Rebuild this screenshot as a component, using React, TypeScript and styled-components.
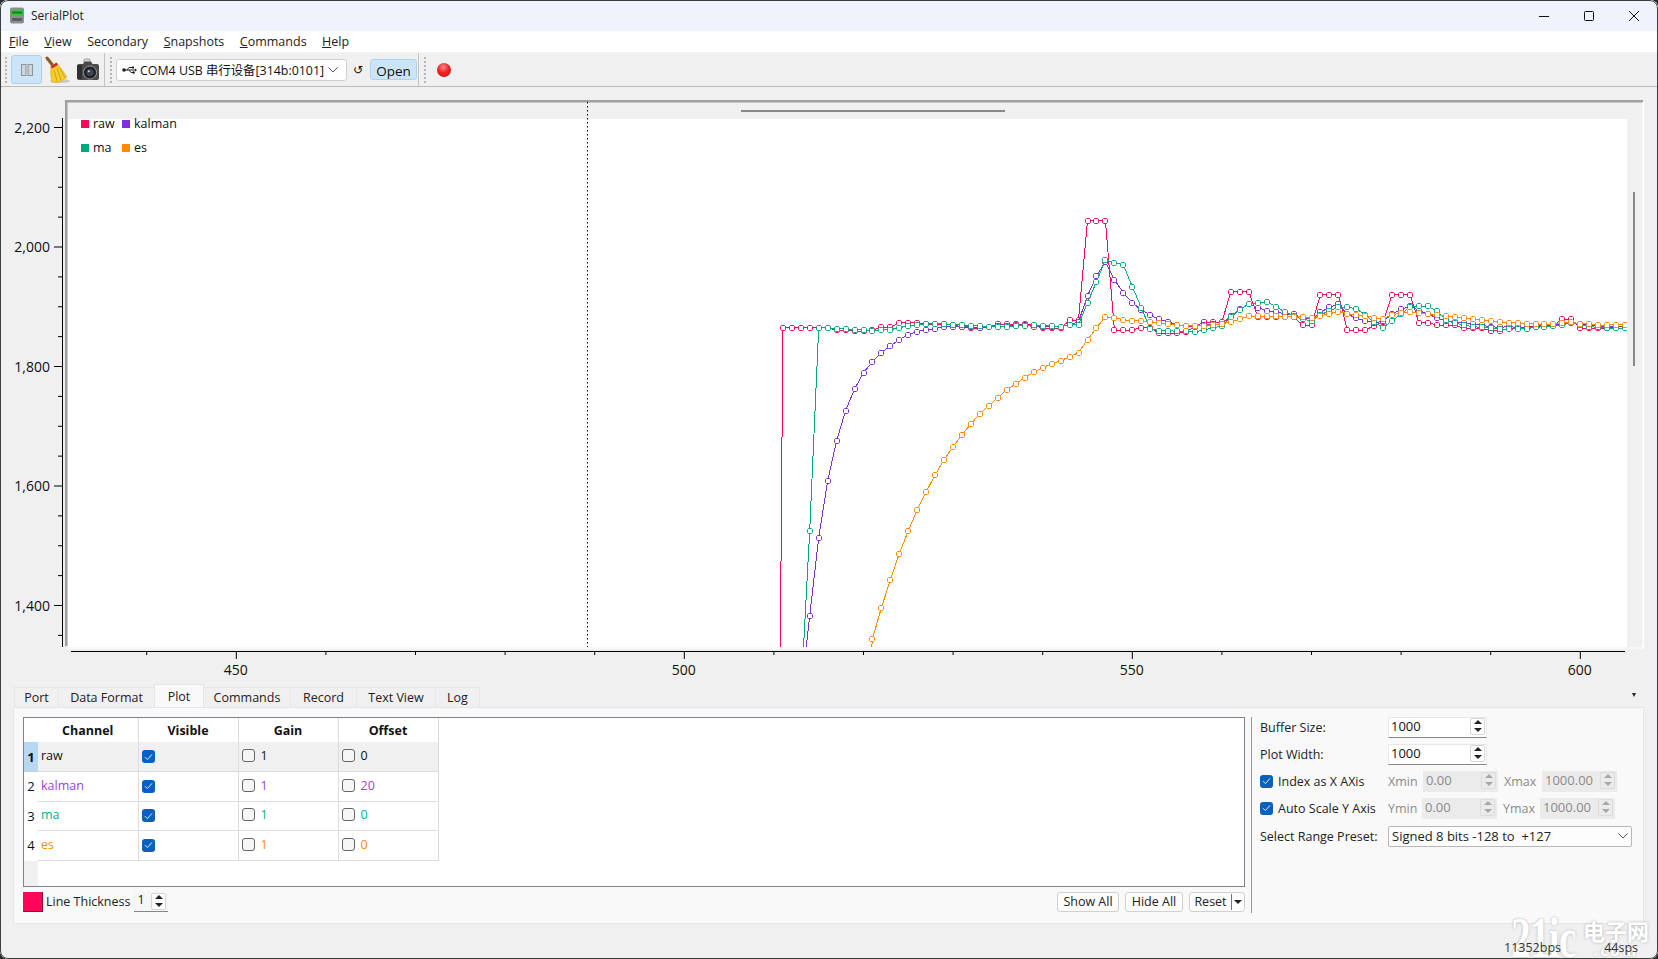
import React from "react";
import styled, { createGlobalStyle } from "styled-components";

const uiFont = `"Open Sans", "Noto Sans CJK SC", sans-serif`;

const GlobalStyle = createGlobalStyle`
  html, body {
    margin: 0;
    padding: 0;
    background: #2a2a2e;
    overflow: hidden;
  }
  body {
    font-family: ${uiFont};
    font-size: 13.5px;
    color: #111;
  }
`;

// chart data, read as y in "z" units: y = 190 + z / 3
type Series = { name: string; color: string; start: number; z: number[] };

const series: Series[] = [
  {
    name: "raw",
    color: "#ff0759",
    start: 510,
    z: [
      3756, 413, 413, 413, 413, 413, 413, 421, 421, 424, 424, 421, 412, 412, 398, 398, 398, 403, 403, 403, 406, 410, 415, 415, 410,
      403, 403, 403, 403, 406, 415, 415, 415, 390, 390, 92, 92, 92, 420, 420, 420, 413, 413, 430, 430, 430, 425, 410, 396, 396,
      396, 305, 305, 305, 380, 380, 380, 380, 380, 405, 405, 314, 314, 314, 420, 420, 420, 407, 395, 314, 314, 314, 398, 398, 405,
      405, 405, 415, 415, 415, 422, 422, 415, 413, 413, 406, 406, 406, 388, 388, 415, 415, 415, 415, 410, 410,
    ],
  },
  {
    name: "kalman",
    color: "#7f2fd6",
    start: 513,
    z: [
      1515, 1277, 1043, 872, 752, 662, 597, 548, 515, 488, 467, 449, 434, 425, 419, 416, 410, 410, 410, 410, 413, 410, 408, 408, 405,
      405, 410, 410, 410, 410, 404, 395, 317, 258, 215, 269, 308, 338, 360, 375, 388, 396, 404, 408, 410, 404, 403, 402, 378, 358,
      342, 353, 362, 365, 372, 372, 385, 388, 367, 352, 343, 372, 385, 392, 398, 394, 372, 358, 348, 362, 372, 384, 392, 396, 400,
      403, 406, 410, 412, 410, 412, 412, 410, 408, 406, 402, 398, 402, 405, 408, 410, 410, 408,
    ],
  },
  {
    name: "ma",
    color: "#00a97f",
    start: 513,
    z: [
      1524, 1022, 413, 413, 416, 416, 419, 419, 422, 419, 419, 413, 407, 404, 401, 401, 401, 404, 404, 407, 407, 410, 410, 410, 407,
      407, 404, 407, 407, 410, 404, 404, 338, 275, 210, 218, 224, 290, 353, 416, 422, 422, 424, 424, 425, 420, 414, 408, 380, 360,
      342, 338, 335, 350, 365, 378, 388, 392, 375, 362, 352, 352, 356, 375, 397, 413, 392, 372, 350, 348, 348, 364, 390, 400, 405,
      410, 412, 414, 418, 418, 416, 416, 412, 410, 408, 405, 398, 404, 410, 412, 414, 415, 415,
    ],
  },
  {
    name: "es",
    color: "#ff8a00",
    start: 520,
    z: [
      1665, 1346, 1253, 1169, 1091, 1022, 959, 905, 854, 809, 770, 734, 701, 671, 647, 623, 599, 581, 563, 547, 533, 521, 512, 500, 488,
      449, 413, 380, 383, 389, 392, 392, 395, 398, 401, 404, 407, 407, 407, 405, 403, 395, 388, 378, 378, 378, 378, 380, 380, 380,
      384, 378, 371, 365, 371, 374, 378, 383, 386, 375, 368, 365, 368, 371, 374, 378, 382, 385, 387, 389, 392, 395, 398, 398, 401,
      402, 402, 402, 398, 397, 401, 402, 405, 405, 404, 404,
    ],
  },
];

const xOf = (i: number) => 236.3 + (i - 450) * 8.96;
const yOf = (v: number) => 247 - (v - 2000) * 0.5975;

// little octagon snapped to the pixel grid, looks like the plot's aliased circles
const marker = (x: number, y: number) => {
  const cx = Math.round(x);
  const cy = Math.round(y);
  const a = 1.5;
  const b = 2.5;
  return [
    [cx - a, cy - b], [cx + a, cy - b], [cx + b, cy - a], [cx + b, cy + a],
    [cx + a, cy + b], [cx - a, cy + b], [cx - b, cy + a], [cx - b, cy - a],
  ].map((p) => p.join(",")).join(" ");
};

const Chart = () => {
  const xTicks: number[] = [];
  for (let i = 440; i <= 600; i += 10) xTicks.push(i);
  const yTicks: number[] = [];
  for (let v = 1350; v <= 2200; v += 50) yTicks.push(v);

  return (
    <ChartSvg viewBox="0 87 1657 597" width={1657} height={597}>
      <defs>
        <clipPath id="canvas">
          <rect x={68} y={103} width={1559} height={544} />
        </clipPath>
      </defs>
      <rect x={66} y={101} width={1577} height={547} fill="#f0f0f0" />
      <rect x={65} y={100} width={1578} height={2.5} fill="#a0a0a0" />
      <rect x={65} y={100} width={2.5} height={546} fill="#a0a0a0" />
      <rect x={1642.5} y={102} width={1.5} height={546} fill="#fff" />
      <rect x={68} y={647.5} width={1576} height={1} fill="#fff" />
      <rect x={68} y={119} width={1559} height={528} fill="#fff" />
      <rect x={741} y={110} width={264} height={2} fill="#888" />
      <rect x={1633} y={192} width={2} height={174} fill="#888" />
      <line x1={587.5} y1={102} x2={587.5} y2={647} stroke="#000" strokeDasharray="1.5 2.5" />

      <g clipPath="url(#canvas)">
        {series.map((s) => {
          const pts = s.z.map((z, k) => ({ x: xOf(s.start + k), y: 190 + z / 3 }));
          return (
            <g key={s.name} stroke={s.color} fill="none" strokeWidth={1}>
              <polyline shapeRendering="crispEdges" points={pts.map((p) => `${p.x.toFixed(1)},${p.y.toFixed(1)}`).join(" ")} />
              {pts.map((p, k) => (
                <polygon key={k} points={marker(p.x, p.y)} fill="#fff" />
              ))}
            </g>
          );
        })}
      </g>

      <rect x={81} y={120} width={8} height={8} fill="#ff0759" />
      <AxisText x={93} y={128} $size={12.5}>raw</AxisText>
      <rect x={122} y={120} width={8} height={8} fill="#7f2fd6" />
      <AxisText x={134} y={128} $size={12.5}>kalman</AxisText>
      <rect x={81} y={144} width={8} height={8} fill="#00a97f" />
      <AxisText x={93} y={152} $size={12.5}>ma</AxisText>
      <rect x={122} y={144} width={8} height={8} fill="#ff8a00" />
      <AxisText x={134} y={152} $size={12.5}>es</AxisText>

      <line x1={62.5} y1={118} x2={62.5} y2={647} stroke="#000" strokeWidth={1} />
      {yTicks.map((v) => (
        <line key={v} x1={v % 200 === 0 ? 54 : 58} y1={yOf(v)} x2={62} y2={yOf(v)} stroke="#000" />
      ))}
      {[2200, 2000, 1800, 1600, 1400].map((v) => (
        <AxisText key={v} x={50} y={yOf(v) + 5} textAnchor="end">
          {v.toLocaleString("en-US")}
        </AxisText>
      ))}

      <line x1={71} y1={651.5} x2={1625} y2={651.5} stroke="#000" />
      {xTicks.map((i) => (
        <line key={i} x1={xOf(i)} y1={651} x2={xOf(i)} y2={i % 50 === 0 ? 659 : 655} stroke="#000" />
      ))}
      {[450, 500, 550, 600].map((i) => (
        <AxisText key={i} x={xOf(i) - 0.5} y={675} textAnchor="middle">
          {i}
        </AxisText>
      ))}
    </ChartSvg>
  );
};

const AppIcon = () => (
  <svg width="16" height="17" viewBox="0 0 16 17">
    <rect x="1" y="0.5" width="14" height="16" rx="2" fill="#8b8f8b" />
    <rect x="2" y="3" width="12" height="5" fill="#38c13c" />
    <rect x="3" y="4.5" width="10" height="2" fill="#1d7a20" />
    <rect x="3" y="11" width="10" height="3" fill="#5b5f5c" />
  </svg>
);

const PauseIcon = () => (
  <svg width="12" height="12" viewBox="0 0 12 12">
    <rect x="0.5" y="0.5" width="4.5" height="11" fill="#d0d4d6" stroke="#8f9597" />
    <rect x="7" y="0.5" width="4.5" height="11" fill="#d0d4d6" stroke="#8f9597" />
  </svg>
);

const BroomIcon = () => (
  <svg width="26" height="28" viewBox="0 0 26 28">
    <ellipse cx="15" cy="25" rx="10" ry="2" fill="#c9c9c9" />
    <path d="M2 2 L9 11" stroke="#8c5a22" strokeWidth="3" strokeLinecap="round" />
    <path d="M6 10 L12 7 L22 21 Q14 28 7 26 Q5 18 6 10 Z" fill="#f6cf2c" stroke="#d9a514" strokeWidth="0.6" />
    <path d="M9 14 L12 25 M12 12 L16 24 M15 12 L20 22" stroke="#c9930f" strokeWidth="0.8" fill="none" />
    <path d="M5.5 10.5 L11.5 6.5 L13 9 L7 12.5 Z" fill="#c8322a" />
  </svg>
);

const CameraIcon = () => (
  <svg width="24" height="24" viewBox="0 0 24 24">
    <rect x="8" y="1" width="6" height="4" rx="1" fill="#d8d8d8" stroke="#777" strokeWidth="0.6" />
    <path d="M1 8 Q1 6 3 6 L7 6 L8.5 3.5 L15 3.5 L16.5 6 L21 6 Q23 6 23 8 L23 20 Q23 22 21 22 L3 22 Q1 22 1 20 Z" fill="#4a4a4a" />
    <rect x="1" y="7" width="5" height="14" rx="1" fill="#2f2f2f" />
    <circle cx="14" cy="14.5" r="6.6" fill="#222" stroke="#9a9a9a" strokeWidth="1" />
    <circle cx="14" cy="14.5" r="3.6" fill="#3c4658" />
    <circle cx="12.8" cy="13.2" r="1" fill="#cfd6e0" />
  </svg>
);

const UsbIcon = () => (
  <PortIcon width="15" height="8" viewBox="0 0 15 8">
    <path d="M2 4 H14 M5 4 L7 1.5 H10 M7 4 L9 6.5 H11" stroke="#222" strokeWidth="1" fill="none" />
    <circle cx="2" cy="4" r="1.8" fill="#222" />
    <rect x="10" y="0.5" width="2" height="2" fill="#222" />
    <circle cx="11.6" cy="6.5" r="1.2" fill="#222" />
    <path d="M13 2.5 L15 4 L13 5.5 Z" fill="#222" />
  </PortIcon>
);

const Chevron = () => (
  <PortIcon width="10" height="6" viewBox="0 0 10 6">
    <path d="M0.5 0.5 L5 5 L9.5 0.5" stroke="#555" strokeWidth="1" fill="none" />
  </PortIcon>
);

const SmallCheck = () => (
  <svg width="9" height="8" viewBox="0 0 9 8">
    <path d="M1 4.2 L3.4 6.6 L8 1.4" stroke="#dfeaf8" strokeWidth="1" fill="none" />
  </svg>
);

const Spin = ({ disabled }: { disabled?: boolean }) => (
  <SpinArrows $disabled={disabled}>
    <ArrowBox><ArrowUp $disabled={disabled} /></ArrowBox>
    <ArrowBox><ArrowDown $disabled={disabled} /></ArrowBox>
  </SpinArrows>
);

const rows = [
  { id: 1, name: "raw", gain: "1", offset: "0", color: "#111", active: true },
  { id: 2, name: "kalman", gain: "1", offset: "20", color: "#9b3fe0", active: false },
  { id: 3, name: "ma", gain: "1", offset: "0", color: "#00b38c", active: false },
  { id: 4, name: "es", gain: "1", offset: "0", color: "#ff8c00", active: false },
];

const tabs = [
  { label: "Port", width: 45 },
  { label: "Data Format", width: 97 },
  { label: "Plot", width: 50, active: true },
  { label: "Commands", width: 88 },
  { label: "Record", width: 67 },
  { label: "Text View", width: 80 },
  { label: "Log", width: 45 },
];

export default function App() {
  return (
    <>
      <GlobalStyle />
      <Win>
        <TitleBar>
          <AppIcon />
          <TitleText>SerialPlot</TitleText>
          <WinControls>
            <svg width="12" height="12" viewBox="0 0 12 12">
              <path d="M1 6.5 H11" stroke="#111" strokeWidth="1" />
            </svg>
            <svg width="12" height="12" viewBox="0 0 12 12">
              <rect x="1.5" y="1.5" width="9" height="9" rx="1" stroke="#111" fill="none" />
            </svg>
            <svg width="12" height="12" viewBox="0 0 12 12">
              <path d="M1 1 L11 11 M11 1 L1 11" stroke="#111" strokeWidth="1" />
            </svg>
          </WinControls>
        </TitleBar>

        <MenuBar>
          <MenuItem><u>F</u>ile</MenuItem>
          <MenuItem><u>V</u>iew</MenuItem>
          <MenuItem>Secondary</MenuItem>
          <MenuItem><u>S</u>napshots</MenuItem>
          <MenuItem><u>C</u>ommands</MenuItem>
          <MenuItem><u>H</u>elp</MenuItem>
        </MenuBar>

        <ToolBar>
          <Grip />
          <PauseButton><PauseIcon /></PauseButton>
          <ToolIcon $width={31}><BroomIcon /></ToolIcon>
          <ToolIcon $width={30}><CameraIcon /></ToolIcon>
          <ToolSep />
          <Grip />
          <PortCombo>
            <UsbIcon />
            <PortText>COM4 USB 串行设备[314b:0101]</PortText>
            <Chevron />
          </PortCombo>
          <Refresh>↺</Refresh>
          <OpenButton>Open</OpenButton>
          <ToolSep />
          <Grip />
          <RecordDot />
        </ToolBar>

        <Chart />

        <BottomArea>
          <TabBar>
            {tabs.map((t) => (
              <Tab key={t.label} $width={t.width} $active={t.active}>{t.label}</Tab>
            ))}
            <TabMenu />
          </TabBar>

          <Pane>
            <LeftColumn>
              <TableFrame>
                <ChannelTable>
                  <thead>
                    <tr>
                      <CornerCell />
                      <HeadCell>Channel</HeadCell>
                      <HeadCell>Visible</HeadCell>
                      <HeadCell>Gain</HeadCell>
                      <HeadCell>Offset</HeadCell>
                    </tr>
                  </thead>
                  <tbody>
                    {rows.map((r) => (
                      <tr key={r.id}>
                        <RowHead $active={r.active}>{r.id}</RowHead>
                        <Cell $active={r.active} $color={r.color}>{r.name}</Cell>
                        <Cell $active={r.active}>
                          <CheckBox $checked><SmallCheck /></CheckBox>
                        </Cell>
                        <Cell $active={r.active} $color={r.color}>
                          <CellInner><CheckBox />{r.gain}</CellInner>
                        </Cell>
                        <Cell $active={r.active} $color={r.color}>
                          <CellInner><CheckBox />{r.offset}</CellInner>
                        </Cell>
                      </tr>
                    ))}
                  </tbody>
                </ChannelTable>
                <TableFill><FillHead /></TableFill>
              </TableFrame>

              <TableFooter>
                <Swatch />
                <span>Line Thickness</span>
                <ThicknessBox>
                  <ThicknessValue>1</ThicknessValue>
                  <Spin />
                </ThicknessBox>
                <FooterRight>
                  <PushButton $width={62}>Show All</PushButton>
                  <PushButton $width={58}>Hide All</PushButton>
                  <ResetButton>
                    <ResetLabel>Reset</ResetLabel>
                    <ResetCaret><ArrowDown /></ResetCaret>
                  </ResetButton>
                </FooterRight>
              </TableFooter>
            </LeftColumn>

            <VSep />

            <Settings>
              <SettingRow>
                <FieldLabel>Buffer Size:</FieldLabel>
                <SpinBox $width={99}>1000<Spin /></SpinBox>
              </SettingRow>
              <SettingRow>
                <FieldLabel>Plot Width:</FieldLabel>
                <SpinBox $width={99}>1000<Spin /></SpinBox>
              </SettingRow>
              <SettingRow>
                <FieldLabel>
                  <CheckBox $checked><SmallCheck /></CheckBox>
                  Index as X AXis
                </FieldLabel>
                <RangeLabel $width={35}>Xmin</RangeLabel>
                <SpinBox $width={75} $disabled>0.00<Spin disabled /></SpinBox>
                <RangeLabel $width={38} $left={6}>Xmax</RangeLabel>
                <SpinBox $width={75} $disabled>1000.00<Spin disabled /></SpinBox>
              </SettingRow>
              <SettingRow>
                <FieldLabel>
                  <CheckBox $checked><SmallCheck /></CheckBox>
                  Auto Scale Y Axis
                </FieldLabel>
                <RangeLabel $width={34}>Ymin</RangeLabel>
                <SpinBox $width={75} $disabled>0.00<Spin disabled /></SpinBox>
                <RangeLabel $width={37} $left={6}>Ymax</RangeLabel>
                <SpinBox $width={75} $disabled>1000.00<Spin disabled /></SpinBox>
              </SettingRow>
              <PresetRow>
                <FieldLabel>Select Range Preset:</FieldLabel>
                <PresetCombo>
                  <span>Signed 8 bits -128 to  +127</span>
                  <Chevron />
                </PresetCombo>
              </PresetRow>
            </Settings>
          </Pane>

          <StatusBar>
            <Watermark>
              <Mark21>21ic</Mark21>
              <MarkCn>
                电子网
                <MarkCom>.com</MarkCom>
              </MarkCn>
            </Watermark>
            <StatusText $right={97}>11352bps</StatusText>
            <StatusText $right={20}>44sps</StatusText>
          </StatusBar>
        </BottomArea>
      </Win>
    </>
  );
}

const Win = styled.div`
  position: relative;
  width: 1658px;
  height: 959px;
  display: flex;
  flex-direction: column;
  background: #f0f0f0;
  border-radius: 8px;
  overflow: hidden;

  &::after {
    content: "";
    position: absolute;
    inset: 0;
    border: 1px solid #3d3d40;
    border-radius: 8px;
    pointer-events: none;
  }
`;

const TitleBar = styled.div`
  height: 31px;
  flex: none;
  display: flex;
  align-items: center;
  padding-left: 9px;
  background: #eff3fb;
`;

const TitleText = styled.span`
  margin-left: 6px;
  font-size: 12px;
  color: #222;
`;

const WinControls = styled.div`
  margin-left: auto;
  margin-right: 18px;
  display: flex;
  gap: 33px;
`;

const MenuBar = styled.div`
  height: 21px;
  flex: none;
  display: flex;
  align-items: center;
  padding-left: 9px;
  gap: 15.5px;
  background: #fff;
  border-bottom: 1px solid #f4f4f4;
`;

const MenuItem = styled.span`
  font-size: 12.5px;
  color: #222;
`;

const ToolBar = styled.div`
  height: 33px;
  flex: none;
  display: flex;
  align-items: center;
  background: #f0f0f0;
  border-bottom: 1px solid #bcbcbc;
`;

const Grip = styled.div`
  width: 2px;
  height: 26px;
  margin: 0 4px 0 5px;
  background: repeating-linear-gradient(to bottom, #b5b5b5 0 2px, transparent 2px 4px);
`;

const PauseButton = styled.div`
  width: 31px;
  height: 29px;
  display: flex;
  align-items: center;
  justify-content: center;
  box-sizing: border-box;
  background: #cce4f7;
  border: 1px solid #aed2ec;
  border-radius: 3px;
`;

const ToolIcon = styled.div<{ $width: number }>`
  width: ${(p) => p.$width}px;
  display: flex;
  align-items: center;
  justify-content: center;
`;

const ToolSep = styled.div`
  width: 1px;
  height: 33px;
  margin-left: 1px;
  background: #c4c4c4;
`;

const PortIcon = styled.svg`
  flex: none;
`;

const PortCombo = styled.div`
  width: 231px;
  height: 22px;
  box-sizing: border-box;
  display: flex;
  align-items: center;
  padding: 0 8px 0 5px;
  background: #fff;
  border: 1px solid #d0d0d0;
  border-radius: 3px;
`;

const PortText = styled.span`
  flex: 1;
  margin-left: 3px;
  font-size: 12.4px;
  white-space: nowrap;
`;

const Refresh = styled.span`
  width: 22px;
  margin-right: 1px;
  text-align: center;
  font-family: "DejaVu Sans", sans-serif;
  font-size: 12px;
`;

const OpenButton = styled.div`
  width: 47px;
  height: 21px;
  box-sizing: border-box;
  display: flex;
  align-items: center;
  justify-content: center;
  padding-top: 2px;
  font-size: 13.5px;
  background: #cce4f7;
  border: 1px solid #aed2ec;
  border-radius: 3px;
`;

const RecordDot = styled.div`
  width: 14px;
  height: 14px;
  margin-left: 7px;
  border-radius: 50%;
  background: radial-gradient(circle at 45% 30%, #ff8a8a 0%, #ee2222 45%, #c01414 100%);
`;

const ChartSvg = styled.svg`
  flex: none;
  display: block;
`;

const AxisText = styled.text<{ $size?: number }>`
  font-family: ${uiFont};
  font-size: ${(p) => p.$size ?? 14}px;
  fill: #111;
`;

const BottomArea = styled.div`
  flex: 1;
  display: flex;
  flex-direction: column;
  min-height: 0;
`;

const TabBar = styled.div`
  height: 23px;
  flex: none;
  display: flex;
  align-items: flex-end;
  padding-left: 14px;
`;

const Tab = styled.div<{ $width: number; $active?: boolean }>`
  width: ${(p) => p.$width}px;
  height: ${(p) => (p.$active ? 23 : 20)}px;
  box-sizing: border-box;
  display: flex;
  align-items: center;
  justify-content: center;
  font-size: 12.5px;
  color: #222;
  background: ${(p) => (p.$active ? "#f9f9f9" : "#f0f0f0")};
  border: 1px solid #e6e6e6;
  border-bottom: none;
  margin-right: -1px;
`;

const TabMenu = styled.div`
  margin: 0 22px 10px auto;
  width: 0;
  height: 0;
  border-left: 2.5px solid transparent;
  border-right: 2.5px solid transparent;
  border-top: 4px solid #222;
`;

const Pane = styled.div`
  height: 217px;
  flex: none;
  box-sizing: border-box;
  display: flex;
  margin: 0 14px 0 13px;
  padding: 9px 10px 0 9px;
  background: #f9f9f9;
  border: 1px solid #e6e6e6;
`;

const LeftColumn = styled.div`
  width: 1222px;
  flex: none;
`;

const TableFrame = styled.div`
  height: 170px;
  box-sizing: border-box;
  display: flex;
  flex-direction: column;
  background: #fff;
  border: 1px solid #82828e;
`;

const ChannelTable = styled.table`
  border-collapse: collapse;
  table-layout: fixed;
  width: 414px;
  flex: none;
  font-size: 12.5px;
`;

const CornerCell = styled.th`
  box-sizing: border-box;
  width: 14px;
  height: 24px;
  padding: 0;
`;

const HeadCell = styled.th`
  box-sizing: border-box;
  width: 100px;
  height: 24px;
  padding: 0;
  font-weight: 700;
  font-size: 12.5px;
  border-right: 1px solid #dcdcdc;
`;

const RowHead = styled.td<{ $active: boolean }>`
  box-sizing: border-box;
  height: 29.5px;
  padding: 0;
  text-align: center;
  font-size: 13px;
  font-weight: ${(p) => (p.$active ? 700 : 400)};
  background: ${(p) => (p.$active ? "#b8d8f2" : "#fff")};
`;

const Cell = styled.td<{ $active: boolean; $color?: string }>`
  box-sizing: border-box;
  height: 29.5px;
  padding: 0 3px 2px;
  color: ${(p) => p.$color ?? "#111"};
  background: ${(p) => (p.$active ? "#f0f0f0" : "#fff")};
  border-right: 1px solid #dcdcdc;
  border-bottom: 1px solid #dcdcdc;
  font-size: 12.5px;
`;

const CellInner = styled.div`
  display: flex;
  align-items: center;
  gap: 6px;
`;

const CheckBox = styled.span<{ $checked?: boolean }>`
  flex: none;
  width: 13px;
  height: 13px;
  box-sizing: border-box;
  display: inline-flex;
  align-items: center;
  justify-content: center;
  vertical-align: middle;
  border-radius: 3px;
  background: ${(p) => (p.$checked ? "#0a60bf" : "#f6f6f6")};
  border: ${(p) => (p.$checked ? "none" : "1px solid #666")};
`;

const TableFill = styled.div`
  flex: 1;
  display: flex;
`;

const FillHead = styled.div`
  width: 14px;
  background: #f0f0f0;
`;

const TableFooter = styled.div`
  height: 21px;
  margin-top: 4px;
  display: flex;
  align-items: center;
  font-size: 12.5px;
  color: #222;
`;

const Swatch = styled.div`
  width: 20px;
  height: 20px;
  margin-right: 3px;
  box-sizing: border-box;
  background: #ff0759;
  border-right: 1px solid #8f0a38;
  border-bottom: 1px solid #8f0a38;
`;

const ThicknessBox = styled.div`
  width: 34px;
  height: 21px;
  margin-left: 4px;
  box-sizing: border-box;
  display: flex;
  align-items: center;
  justify-content: space-between;
  padding: 0 2px 0 3px;
  background: #f6f6f6;
  border-bottom: 1px solid #868686;
`;

const ThicknessValue = styled.span`
  margin-top: -3px;
`;

const FooterRight = styled.div`
  margin-left: auto;
  display: flex;
  gap: 6px;
`;

const PushButton = styled.div<{ $width: number }>`
  width: ${(p) => p.$width}px;
  height: 20px;
  box-sizing: border-box;
  display: flex;
  align-items: center;
  justify-content: center;
  font-size: 12.5px;
  background: #fdfdfd;
  border: 1px solid #d0d0d0;
  border-radius: 3px;
`;

const ResetButton = styled(PushButton).attrs({ $width: 56 })`
  justify-content: flex-start;
`;

const ResetLabel = styled.span`
  flex: 1;
  text-align: center;
  border-right: 1px solid #777;
  line-height: 16px;
`;

const ResetCaret = styled.span`
  width: 12px;
  display: flex;
  justify-content: center;
`;

const VSep = styled.div`
  width: 1px;
  height: 196px;
  margin-left: 6px;
  flex: none;
  background: #9a9a9a;
`;

const Settings = styled.div`
  margin-left: 8px;
  display: flex;
  flex-direction: column;
  gap: 7px;
  font-size: 12.5px;
  color: #222;
`;

const SettingRow = styled.div`
  height: 20px;
  display: flex;
  align-items: center;
`;

const PresetRow = styled(SettingRow)`
  margin-top: 1px;
`;

const FieldLabel = styled.div`
  width: 128px;
  flex: none;
  display: flex;
  align-items: center;
  gap: 5px;
  white-space: nowrap;
`;

const RangeLabel = styled.span<{ $width: number; $left?: number }>`
  width: ${(p) => p.$width}px;
  margin-left: ${(p) => p.$left ?? 0}px;
  flex: none;
  color: #8a8a8a;
`;

const SpinBox = styled.div<{ $width: number; $disabled?: boolean }>`
  width: ${(p) => p.$width}px;
  height: 21px;
  flex: none;
  box-sizing: border-box;
  display: flex;
  align-items: center;
  justify-content: space-between;
  padding: 0 1px 2px 2px;
  font-size: 13px;
  color: ${(p) => (p.$disabled ? "#8a8a8a" : "#111")};
  background: ${(p) => (p.$disabled ? "#ebebeb" : "#fff")};
  border: 1px solid ${(p) => (p.$disabled ? "#ebebeb" : "#e8e8e8")};
  border-bottom: 1px solid ${(p) => (p.$disabled ? "#ebebeb" : "#868686")};
`;

const SpinArrows = styled.div<{ $disabled?: boolean }>`
  width: 13px;
  flex: none;
  display: flex;
  flex-direction: column;
  gap: 1px;
  background: ${(p) => (p.$disabled ? "transparent" : "#fff")};
  border: 1px solid ${(p) => (p.$disabled ? "#dcdcdc" : "#d5d5d5")};
  border-radius: 2px;
`;

const ArrowBox = styled.span`
  height: 7px;
  display: flex;
  align-items: center;
  justify-content: center;
`;

const ArrowUp = styled.span<{ $disabled?: boolean }>`
  width: 0;
  height: 0;
  border-left: 4px solid transparent;
  border-right: 4px solid transparent;
  border-bottom: 4px solid ${(p) => (p.$disabled ? "#a8a8a8" : "#222")};
`;

const ArrowDown = styled.span<{ $disabled?: boolean }>`
  width: 0;
  height: 0;
  border-left: 4px solid transparent;
  border-right: 4px solid transparent;
  border-top: 4px solid ${(p) => (p.$disabled ? "#a8a8a8" : "#222")};
`;

const PresetCombo = styled.div`
  width: 244px;
  height: 21px;
  box-sizing: border-box;
  display: flex;
  align-items: center;
  justify-content: space-between;
  padding: 0 3px 0 3px;
  font-size: 13px;
  white-space: pre;
  background: #fdfdfd;
  border: 1px solid #b8b8b8;
  border-radius: 2px;
`;

const StatusBar = styled.div`
  position: relative;
  flex: 1;
`;

const StatusText = styled.span<{ $right: number }>`
  position: absolute;
  bottom: 3px;
  right: ${(p) => p.$right}px;
  font-size: 12.5px;
  color: #333;
`;

const Watermark = styled.div`
  position: absolute;
  right: 9px;
  bottom: 0;
  display: flex;
  align-items: flex-end;
  color: #fff;
  opacity: 0.95;
  pointer-events: none;
`;

const Mark21 = styled.span`
  display: block;
  width: 72px;
  height: 42px;
  font-family: "Liberation Serif", serif;
  font-weight: 700;
  font-size: 56px;
  line-height: 42px;
  letter-spacing: -1px;
  transform: scaleX(0.7);
  transform-origin: left bottom;
  white-space: nowrap;
  text-shadow: 0 0 3px #a8a8a8;
`;

const MarkCn = styled.span`
  display: flex;
  flex-direction: column;
  align-items: center;
  font-family: "Noto Sans CJK SC", sans-serif;
  font-weight: 700;
  font-size: 22px;
  line-height: 22px;
  text-shadow: 0 0 3px #a8a8a8;
`;

const MarkCom = styled.span`
  font-size: 14px;
  line-height: 18px;
  letter-spacing: 3px;
`;
